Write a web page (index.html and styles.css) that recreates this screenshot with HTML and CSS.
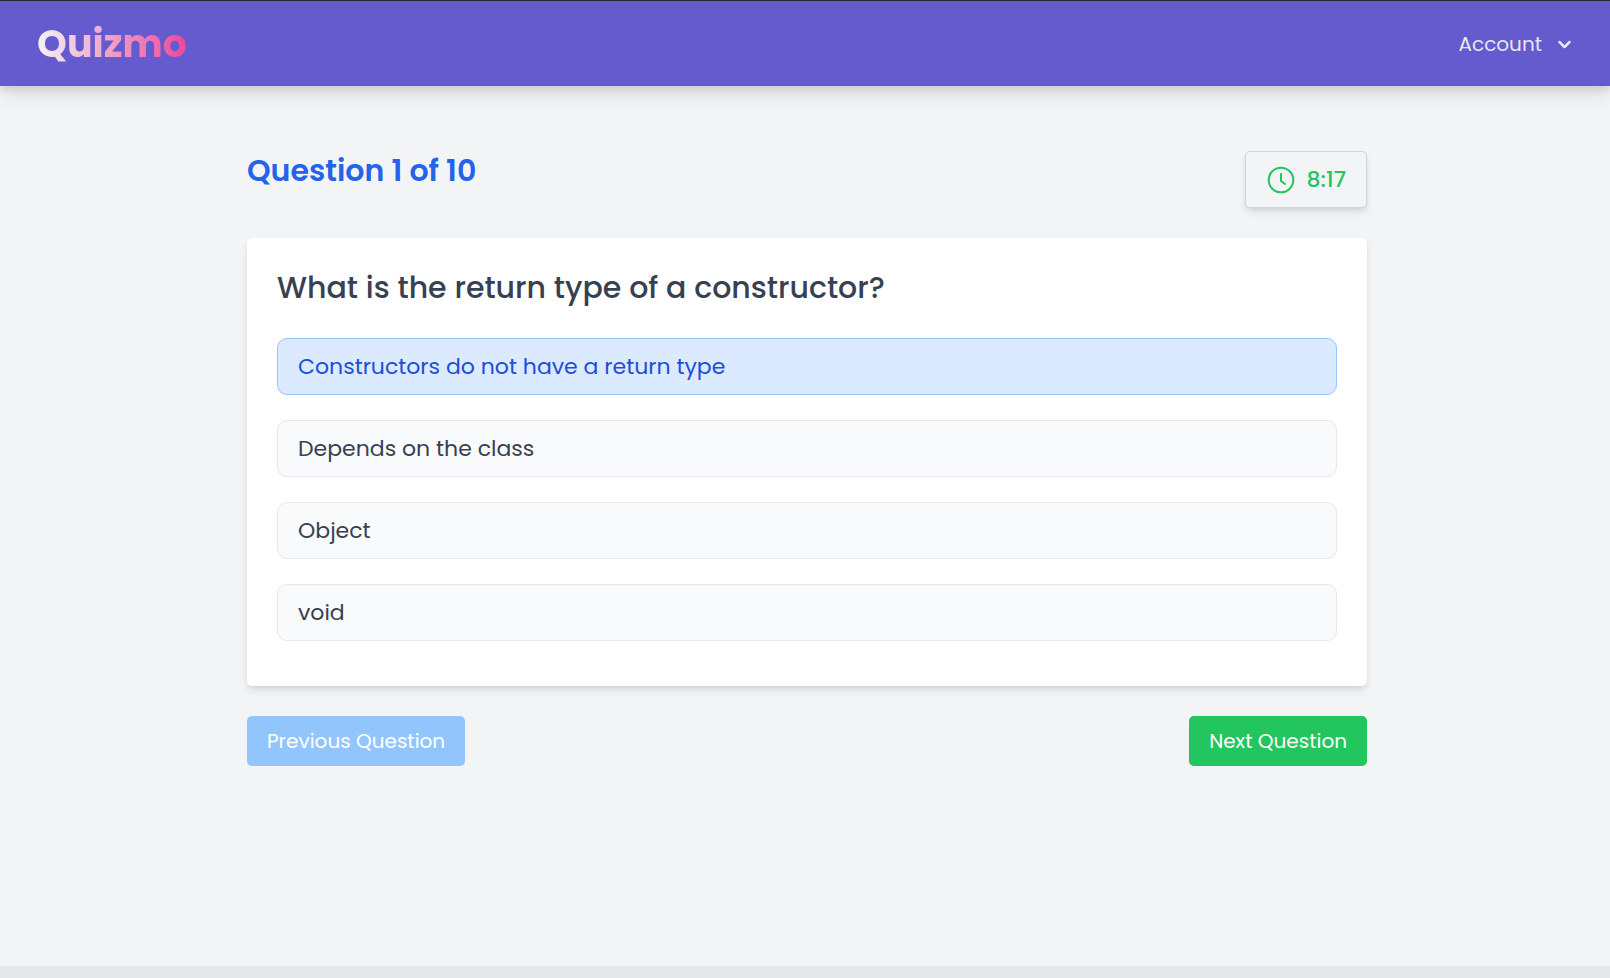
FILE: index.html
```html
<!DOCTYPE html>
<html lang="en">
<head>
<meta charset="utf-8">
<meta name="viewport" content="width=device-width, initial-scale=1">
<title>Quizmo</title>
<link rel="stylesheet" href="styles.css">
</head>
<body>
<header class="navbar">
  <a class="logo" href="#">Quizmo</a>
  <button class="account" type="button" aria-haspopup="true">
    <span>Account</span>
    <svg class="chevron" viewBox="0 0 20 20" fill="currentColor" aria-hidden="true"><path fill-rule="evenodd" d="M5.293 7.293a1 1 0 011.414 0L10 10.586l3.293-3.293a1 1 0 111.414 1.414l-4 4a1 1 0 01-1.414 0l-4-4a1 1 0 010-1.414z" clip-rule="evenodd"/></svg>
  </button>
</header>
<main class="page">
  <div class="quiz">
    <div class="quiz-head">
      <h1 class="progress">Question 1 of 10</h1>
      <div class="timer" role="timer">
        <svg class="clock" viewBox="0 0 28 28" fill="none" stroke="currentColor" stroke-width="2" stroke-linecap="round" stroke-linejoin="round" aria-hidden="true"><circle cx="14" cy="14" r="12.3"/><path d="M14 8v7l4 3"/></svg>
        <span>8:17</span>
      </div>
    </div>
    <section class="card">
      <h2 class="question">What is the return type of a constructor?</h2>
      <div class="options">
        <button class="option selected" type="button" aria-pressed="true">Constructors do not have a return type</button>
        <button class="option" type="button" aria-pressed="false">Depends on the class</button>
        <button class="option" type="button" aria-pressed="false">Object</button>
        <button class="option" type="button" aria-pressed="false">void</button>
      </div>
    </section>
    <div class="actions">
      <button class="btn btn-prev" type="button" disabled>Previous Question</button>
      <button class="btn btn-next" type="button">Next Question</button>
    </div>
  </div>
</main>
<footer class="footer"></footer>
</body>
</html>
```

FILE: styles.css
```css
* {
  box-sizing: border-box;
}

body {
  margin: 0;
  min-height: 100vh;
  display: flex;
  flex-direction: column;
  background: #f3f4f6;
  color: #374151;
  font-family: Poppins, Inter, sans-serif;
}

button {
  font: inherit;
  cursor: pointer;
}

.navbar {
  display: flex;
  align-items: center;
  justify-content: space-between;
  padding: 15px 33px 14px 37px;
  border-top: 1px solid #27272f;
  background: #655bcf;
  box-shadow: 0 8px 18px 0 rgba(0, 0, 0, 0.1), 0 3px 8px 0 rgba(0, 0, 0, 0.1);
}

.logo {
  font-size: 38px;
  line-height: 56px;
  font-weight: 700;
  text-decoration: none;
  color: transparent;
  background: linear-gradient(to right, #f3f4f6, #ec4899);
  background-clip: text;
  -webkit-background-clip: text;
}

.account {
  display: flex;
  align-items: center;
  gap: 10px;
  padding: 0;
  border: 0;
  background: none;
  color: #e5e7eb;
  font-size: 20px;
  line-height: 30px;
}

.chevron {
  width: 25px;
  height: 25px;
}

.page {
  flex: 1;
  padding: 65px 20px 24px 24px;
}

.quiz {
  max-width: 1120px;
  margin: 0 auto;
}

.quiz-head {
  display: flex;
  align-items: flex-start;
  justify-content: space-between;
  margin-bottom: 30px;
}

.progress {
  margin: 0;
  color: #2563eb;
  font-size: 30px;
  line-height: 40px;
  font-weight: 600;
}

.timer {
  display: flex;
  align-items: center;
  gap: 12px;
  padding: 10px 20px 10px 21px;
  border: 1px solid #d1d5db;
  border-radius: 5px;
  color: #22c55e;
  background: #f3f4f6;
  font-size: 22px;
  line-height: 35px;
  font-weight: 500;
  box-shadow: 0 5px 8px -1px rgba(0, 0, 0, 0.1), 0 2px 5px -2px rgba(0, 0, 0, 0.1);
}

.clock {
  width: 28px;
  height: 28px;
}

.card {
  padding: 30px 30px 45px;
  border-radius: 5px;
  background: #fff;
  box-shadow: 0 5px 8px -1px rgba(0, 0, 0, 0.1), 0 2px 5px -2px rgba(0, 0, 0, 0.1);
}

.question {
  margin: 0 0 30px;
  font-size: 30px;
  line-height: 40px;
  font-weight: 500;
}

.options {
  display: grid;
  gap: 25px;
}

.option {
  padding: 10px 20px;
  border: 1px solid #e5e7eb;
  border-radius: 10px;
  background: #f9fafb;
  color: #374151;
  font-size: 22px;
  line-height: 35px;
  text-align: left;
}

.option.selected {
  border-color: #93c5fd;
  background: #dbeafe;
  color: #1d4ed8;
}

.actions {
  display: flex;
  justify-content: space-between;
  margin-top: 30px;
}

.btn {
  padding: 10px 20px;
  border: 0;
  border-radius: 5px;
  color: #fff;
  font-size: 20px;
  line-height: 30px;
}

.btn-prev {
  background: #93c5fd;
  cursor: not-allowed;
}

.btn-next {
  background: #22c55e;
}

.footer {
  height: 12px;
  background: #e5e7eb;
}
```
